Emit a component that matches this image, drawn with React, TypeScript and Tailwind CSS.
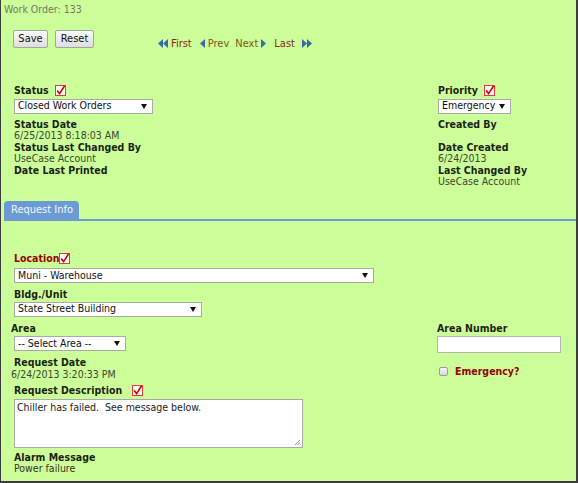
import type { ReactNode } from 'react';

// red "required" marker used next to mandatory fields
function RequiredMark() {
   return (
      <svg width="11" height="11" viewBox="0 0 11 11" className="shrink-0">
         <rect x="0.5" y="0.5" width="10" height="10" fill="#ffffff" stroke="#e23b3b" />
         <path d="M2.2 5.4 L4.6 8.6 L9.6 0.8" fill="none" stroke="#d40000" strokeWidth="1.6" />
      </svg>
   );
}

function DropDown({ value, width }: { value: string; width: string }) {
   return (
      <div className={`${width} h-[15px] flex items-center justify-between bg-white border border-[#a9a9a9] pl-[3px] pr-[5px] text-[#111]`}>
         <span className="whitespace-nowrap">{value}</span>
         <svg width="6" height="5" viewBox="0 0 6 5" className="shrink-0">
            <polygon points="0,0 6,0 3,5" fill="#111" />
         </svg>
      </div>
   );
}

function Label({ children, className = '' }: { children: ReactNode; className?: string }) {
   return <div className={`font-bold text-[#1c1f14] whitespace-nowrap ${className}`}>{children}</div>;
}

function Value({ children, className = '' }: { children: ReactNode; className?: string }) {
   return <div className={`text-[#3b4630] whitespace-nowrap ${className}`}>{children}</div>;
}

function Arrow({ dir, double }: { dir: 'left' | 'right'; double?: boolean }) {
   const w = double ? 10 : 5;
   const pts =
      dir === 'left'
         ? double
            ? ['5,0 0,4.5 5,9', '10,0 5,4.5 10,9']
            : ['5,0 0,4.5 5,9']
         : double
         ? ['0,0 5,4.5 0,9', '5,0 10,4.5 5,9']
         : ['0,0 5,4.5 0,9'];
   return (
      <svg width={w} height="9" viewBox={`0 0 ${w} 9`} className="shrink-0">
         {pts.map((p) => (
            <polygon key={p} points={p} fill="#3a6aa8" />
         ))}
      </svg>
   );
}

function Button({ children, width }: { children: ReactNode; width: string }) {
   return (
      <button
         type="button"
         className={`${width} h-[18px] rounded-[2px] border border-[#a3a3a3] bg-gradient-to-b from-[#fafafa] to-[#dedede] text-[#111] text-[11px] leading-none`}
      >
         {children}
      </button>
   );
}

export default function App() {
   return (
      <div className="w-[578px] h-[483px] overflow-hidden bg-[#ccff99] border-l border-r-2 border-b-2 border-[#3c3c3c] text-[10.5px] leading-[11.5px] font-['DejaVu_Sans_Condensed','Liberation_Sans',sans-serif]">
         <div className="pl-[3px] pt-[4px] text-[#75785f]">Work Order: 133</div>

         {/* save / reset and record navigation */}
         <div className="flex items-start pl-[12px] mt-[14px]">
            <Button width="w-[35px]">Save</Button>
            <Button width="w-[39px] ml-[7px]">Reset</Button>
            <div className="flex items-center ml-[64px] mt-[8px] text-[11px]">
               <Arrow dir="left" double />
               <span className="ml-[3px] text-[#8e1f1f]">First</span>
               <span className="ml-[8px]"><Arrow dir="left" /></span>
               <span className="ml-[3px] text-[#7d5a12]">Prev</span>
               <span className="ml-[6px] text-[#7d5a12]">Next</span>
               <span className="ml-[3px]"><Arrow dir="right" /></span>
               <span className="ml-[8px] text-[#8e1f1f]">Last</span>
               <span className="ml-[7px]"><Arrow dir="right" double /></span>
            </div>
         </div>

         {/* status / priority header */}
         <div className="flex pl-[13px] mt-[36px]">
            <div className="w-[424px]">
               <div className="flex items-center gap-[6px]">
                  <Label>Status</Label>
                  <RequiredMark />
               </div>
               <DropDown value="Closed Work Orders" width="w-[139px] mt-[2px]" />
               <Label className="mt-[5px]">Status Date</Label>
               <Value>6/25/2013 8:18:03 AM</Value>
               <Label>Status Last Changed By</Label>
               <Value>UseCase Account</Value>
               <Label>Date Last Printed</Label>
            </div>
            <div>
               <div className="flex items-center gap-[6px]">
                  <Label>Priority</Label>
                  <RequiredMark />
               </div>
               <DropDown value="Emergency" width="w-[73px] mt-[2px]" />
               <Label className="mt-[5px]">Created By</Label>
               <div className="h-[11.5px]" />
               <Label>Date Created</Label>
               <Value>6/24/2013</Value>
               <Label>Last Changed By</Label>
               <Value>UseCase Account</Value>
            </div>
         </div>

         {/* tab strip */}
         <div className="ml-[3px] mt-[13px]">
            <div className="w-[75px] h-[18px] rounded-t-[4px] bg-[#6c9bd4] text-[#f2f6ff] text-[11px] flex items-center pl-[7px] whitespace-nowrap">
               Request Info
            </div>
            <div className="h-[2px] bg-[#6c9bd4]" />
         </div>

         {/* request info form */}
         <div className="pl-[13px] mt-[32px]">
            <div className="flex items-center">
               <Label className="!text-[#990000]">Location</Label>
               <RequiredMark />
            </div>
            <DropDown value="Muni - Warehouse" width="w-[360px] mt-[4px]" />
            <Label className="mt-[6px]">Bldg./Unit</Label>
            <DropDown value="State Street Building" width="w-[188px] mt-[1px]" />

            <div className="flex mt-[6px]">
               <div className="w-[423px]">
                  <Label className="-ml-[3px]">Area</Label>
                  <DropDown value="-- Select Area --" width="w-[112px] mt-[2px]" />
                  <Label className="mt-[6px]">Request Date</Label>
                  <Value className="-ml-[3px]">6/24/2013 3:20:33 PM</Value>
                  <div className="flex items-center gap-[10px] mt-[5px]">
                     <Label>Request Description</Label>
                     <RequiredMark />
                  </div>
                  <div className="relative w-[289px] h-[49px] mt-[2px] bg-white border border-[#a9a9a9] pl-[2px] pt-[2px] text-[#222] whitespace-pre">
                     {'Chiller has failed.  See message below.'}
                     <svg width="7" height="7" viewBox="0 0 7 7" className="absolute right-[1px] bottom-[1px]">
                        <path d="M1 6 L6 1 M3.5 6 L6 3.5" stroke="#9a9a9a" strokeWidth="1" />
                     </svg>
                  </div>
                  <Label className="mt-[4px]">Alarm Message</Label>
                  <Value className="!text-[#3a2f22]">Power failure</Value>
               </div>
               <div>
                  <Label>Area Number</Label>
                  <div className="w-[124px] h-[17px] mt-[2px] bg-white border border-[#b5b5b5]" />
                  <div className="flex items-center ml-[2px] mt-[13px] gap-[7px]">
                     <div className="w-[9px] h-[9px] rounded-[2px] border border-[#9c9c9c] bg-gradient-to-b from-[#f4f4f4] to-[#d8d8d8]" />
                     <Label className="!text-[#990000]">Emergency?</Label>
                  </div>
               </div>
            </div>
         </div>
      </div>
   );
}
